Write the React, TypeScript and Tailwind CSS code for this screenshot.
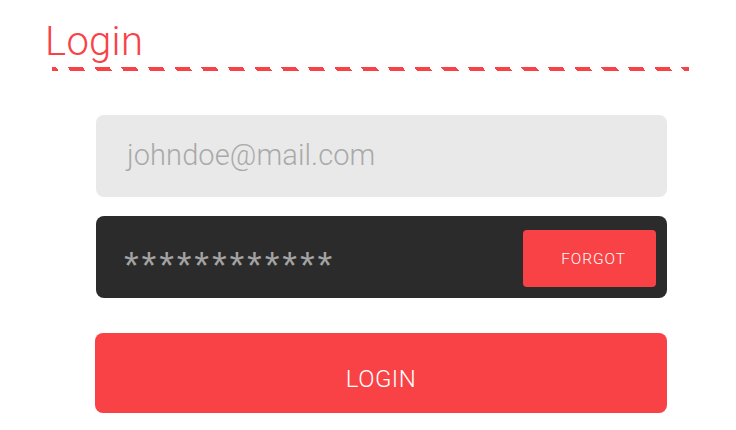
import React from "react";

export default function App() {
  return (
    <div className="w-[736px] h-[430px] bg-white overflow-hidden font-['Roboto','Liberation_Sans',sans-serif]">
      <div className="pt-[22px] pl-[45px]">
        <h1 className="text-[40px] leading-[40px] font-light text-[#f84246] tracking-[0.3px]">Login</h1>
      </div>
      <div className="ml-[52px] mt-[5px] w-[637px] h-[4px] bg-[image:repeating-linear-gradient(53deg,#f84246_0px,#f84246_5.47px,transparent_5.47px,transparent_14.77px,#f84246_14.77px,#f84246_21.3px)]" />
      <div className="ml-[96px] mt-[44px] w-[571px] flex flex-col">
        <div className="h-[82px] rounded-[8px] bg-[#e9e9e9] flex items-center pl-[31px]">
          <span className="text-[29px] font-light text-[#a9a9a9] tracking-[0.1px]">johndoe@mail.com</span>
        </div>
        <div className="mt-[19px] h-[82px] rounded-[8px] bg-[#2b2b2b] flex items-center justify-between pl-[28px] pr-[11px]">
          <span className="font-['Liberation_Sans',sans-serif] text-[38px] leading-none text-[#a3a3a3] tracking-[2.8px] pt-[17px]">************</span>
          <button className="mt-[3px] w-[133px] h-[57px] rounded-[4px] bg-[#f84246] text-white text-[15.5px] font-light pt-[2px] pl-[8px] tracking-[0.9px]">FORGOT</button>
        </div>
        <button className="mt-[35px] -ml-[1px] w-[572px] h-[80px] rounded-[8px] bg-[#f84246] text-white text-[24px] font-light pt-[12px] tracking-[0.5px]">LOGIN</button>
      </div>
    </div>
  );
}
